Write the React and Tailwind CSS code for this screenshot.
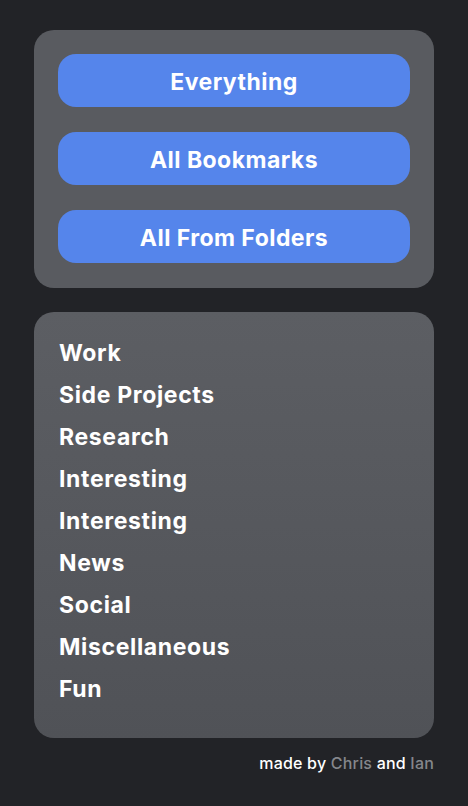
export default function App() {
  const buttons = ["Everything", "All Bookmarks", "All From Folders"]
  const folders = [
    "Work",
    "Side Projects",
    "Research",
    "Interesting",
    "Interesting",
    "News",
    "Social",
    "Miscellaneous",
    "Fun",
  ]

  return (
    <div
      className="w-[468px] h-[806px] bg-[#222327] px-[34px] pt-[30px] flex flex-col"
      style={{ fontFamily: "Inter, 'Noto Sans', sans-serif" }}
    >
      {/* Quick buttons */}
      <div className="rounded-[20px] bg-[#595b60] px-6 pt-6 pb-[25px] flex flex-col gap-[25px]">
        {buttons.map((label) => (
          <button
            key={label}
            className="h-[53px] pt-[3px] rounded-[18px] bg-[#5585eb] text-white text-[23px] font-bold tracking-[0.45px]"
          >
            {label}
          </button>
        ))}
      </div>

      {/* Folders */}
      <div className="mt-6 rounded-[20px] bg-gradient-to-b from-[#5c5e63] to-[#505257] h-[426px] pl-[25px] pt-[26px] flex flex-col">
        {folders.map((name, i) => (
          <div
            key={i}
            className="h-[42px] leading-[30px] text-white text-[23px] font-bold tracking-[0.65px]"
          >
            {name}
          </div>
        ))}
      </div>

      {/* Footer */}
      <div className="mt-[13px] text-right text-[16px] text-white font-medium tracking-[0.2px]">
        made by <span className="text-[#85878c]">Chris</span> and{" "}
        <span className="text-[#85878c]">Ian</span>
      </div>
    </div>
  )
}
